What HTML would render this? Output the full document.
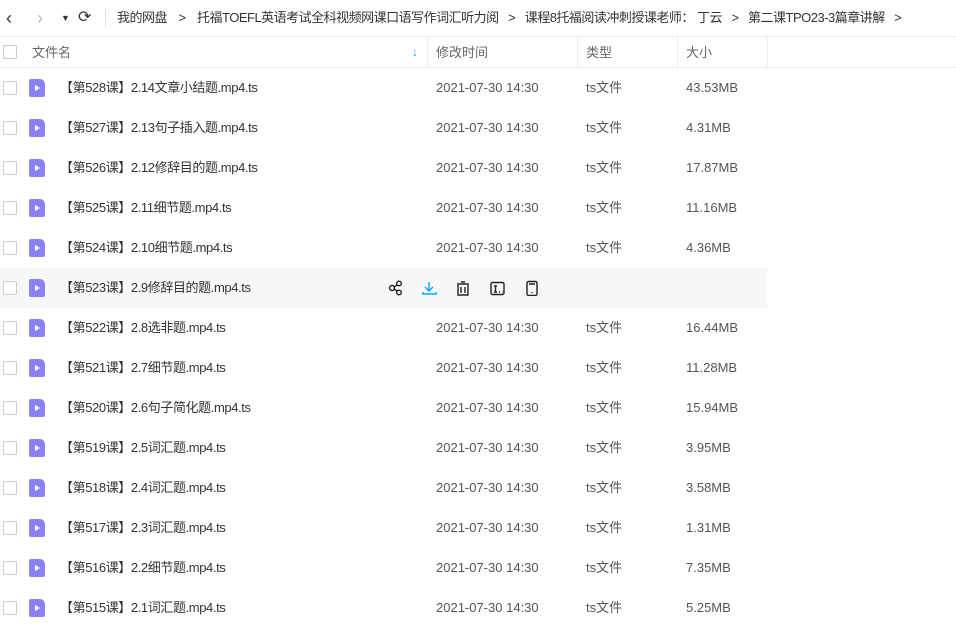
<!DOCTYPE html>
<html><head><meta charset="utf-8"><style>
*{margin:0;padding:0;box-sizing:border-box}
body{width:956px;height:643px;overflow:hidden;background:#fff;font-family:"Liberation Sans","Noto Sans CJK SC",sans-serif;font-size:13px;color:#333}
.top{height:37px;position:relative;border-bottom:1px solid #eee}
.top span{position:absolute;top:0;line-height:36px;white-space:nowrap}
.hdr{height:31px;position:relative;border-bottom:1px solid #eee;color:#666}
.hdr span{position:absolute;top:0;line-height:31px}
.vl{position:absolute;top:0;height:31px;width:1px;background:#eee}
.row{height:40px;position:relative;width:767px}
.row.h{background:#f7f8fa}
.cb{position:absolute;left:3px;top:13px;width:14px;height:14px;border:1px solid #ccc;border-radius:2px;background:#fff}
.ic{position:absolute;left:29px;top:11px;width:16px;height:18px;background:#8b83f5;border-radius:2px 5px 2px 2px}
.ic:after{content:"";position:absolute;left:6px;top:6px;border-left:5px solid #fff;border-top:3px solid transparent;border-bottom:3px solid transparent}
.row span{position:absolute;top:0;line-height:40px;white-space:nowrap;color:#555}
.n{left:60px;color:#333!important;letter-spacing:-0.4px}
.d{left:436px}.t{left:586px}.s{left:686px}
.g{display:inline-block;width:22px;text-align:center}
.bc{letter-spacing:-0.5px}
</style></head><body>
<div class="top">
<span style="left:6px;font-size:18px;color:#333">‹</span>
<span style="left:37px;font-size:18px;color:#bbb">›</span>
<span style="left:61px;font-size:9px">▼</span>
<span style="left:78px;font-size:16px">⟳</span>
<div style="position:absolute;left:105px;top:9px;width:1px;height:18px;background:#ddd"></div>
<span class="bc" style="left:117px">我的网盘<span class="g" style="position:static;margin:0 4px">&gt;</span>托福TOEFL英语考试全科视频网课口语写作词汇听力阅<span class="g" style="position:static;margin:0 2px">&gt;</span>课程8托福阅读冲刺授课老师： 丁云<span class="g" style="position:static;margin:0 2px">&gt;</span>第二课TPO23-3篇章讲解<span class="g" style="position:static;margin:0 2px">&gt;</span></span>
</div>
<div class="hdr">
<div class="cb" style="top:8px"></div>
<span style="left:32px">文件名</span>
<span style="left:412px;color:#06a7ff;font-size:12px;font-weight:bold">↓</span>
<div class="vl" style="left:427px"></div><span style="left:436px">修改时间</span>
<div class="vl" style="left:577px"></div><span style="left:586px">类型</span>
<div class="vl" style="left:677px"></div><span style="left:686px">大小</span>
<div class="vl" style="left:767px"></div>
</div>
<div class="row"><div class="cb"></div><div class="ic"></div><span class="n">【第528课】2.14文章小结题.mp4.ts</span><span class="d">2021-07-30 14:30</span><span class="t">ts文件</span><span class="s">43.53MB</span></div>
<div class="row"><div class="cb"></div><div class="ic"></div><span class="n">【第527课】2.13句子插入题.mp4.ts</span><span class="d">2021-07-30 14:30</span><span class="t">ts文件</span><span class="s">4.31MB</span></div>
<div class="row"><div class="cb"></div><div class="ic"></div><span class="n">【第526课】2.12修辞目的题.mp4.ts</span><span class="d">2021-07-30 14:30</span><span class="t">ts文件</span><span class="s">17.87MB</span></div>
<div class="row"><div class="cb"></div><div class="ic"></div><span class="n">【第525课】2.11细节题.mp4.ts</span><span class="d">2021-07-30 14:30</span><span class="t">ts文件</span><span class="s">11.16MB</span></div>
<div class="row"><div class="cb"></div><div class="ic"></div><span class="n">【第524课】2.10细节题.mp4.ts</span><span class="d">2021-07-30 14:30</span><span class="t">ts文件</span><span class="s">4.36MB</span></div>
<div class="row h"><div class="cb"></div><div class="ic"></div><span class="n">【第523课】2.9修辞目的题.mp4.ts</span>
<svg style="position:absolute;left:388px;top:12px" width="160" height="16" fill="none" stroke-width="1.4">
<g stroke="#222"><circle cx="4" cy="8" r="2.5"/><circle cx="11" cy="3.5" r="2.3"/><circle cx="11" cy="12.5" r="2.3"/><path d="M6 7l3-2M6 9l3 2"/></g>
<g stroke="#06a7ff"><path d="M41 2v8M37 7l4 4 4-4M35 12v2h13v-2"/></g>
<g stroke="#222"><path d="M69 4h12M73 2h4M70 5v10h10V5M73 7v6M77 7v6"/><rect x="103" y="2.5" width="13" height="12" rx="1.5"/><path d="M106 6h3M107.5 6v6M106 12h3M111 12h1M114 12h.5"/><rect x="139" y="1.5" width="10" height="14" rx="1.5"/><path d="M141 4h6M144 12v1"/></g>
</svg></div>
<div class="row"><div class="cb"></div><div class="ic"></div><span class="n">【第522课】2.8选非题.mp4.ts</span><span class="d">2021-07-30 14:30</span><span class="t">ts文件</span><span class="s">16.44MB</span></div>
<div class="row"><div class="cb"></div><div class="ic"></div><span class="n">【第521课】2.7细节题.mp4.ts</span><span class="d">2021-07-30 14:30</span><span class="t">ts文件</span><span class="s">11.28MB</span></div>
<div class="row"><div class="cb"></div><div class="ic"></div><span class="n">【第520课】2.6句子简化题.mp4.ts</span><span class="d">2021-07-30 14:30</span><span class="t">ts文件</span><span class="s">15.94MB</span></div>
<div class="row"><div class="cb"></div><div class="ic"></div><span class="n">【第519课】2.5词汇题.mp4.ts</span><span class="d">2021-07-30 14:30</span><span class="t">ts文件</span><span class="s">3.95MB</span></div>
<div class="row"><div class="cb"></div><div class="ic"></div><span class="n">【第518课】2.4词汇题.mp4.ts</span><span class="d">2021-07-30 14:30</span><span class="t">ts文件</span><span class="s">3.58MB</span></div>
<div class="row"><div class="cb"></div><div class="ic"></div><span class="n">【第517课】2.3词汇题.mp4.ts</span><span class="d">2021-07-30 14:30</span><span class="t">ts文件</span><span class="s">1.31MB</span></div>
<div class="row"><div class="cb"></div><div class="ic"></div><span class="n">【第516课】2.2细节题.mp4.ts</span><span class="d">2021-07-30 14:30</span><span class="t">ts文件</span><span class="s">7.35MB</span></div>
<div class="row"><div class="cb"></div><div class="ic"></div><span class="n">【第515课】2.1词汇题.mp4.ts</span><span class="d">2021-07-30 14:30</span><span class="t">ts文件</span><span class="s">5.25MB</span></div>
</body></html>
